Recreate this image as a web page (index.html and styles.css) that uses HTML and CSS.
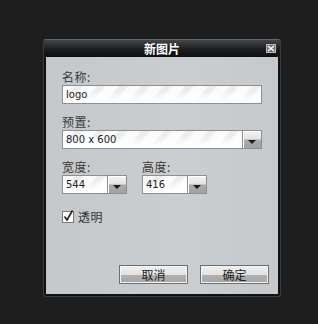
FILE: index.html
```html
<!DOCTYPE html>
<html lang="zh">
<head>
  <meta charset="UTF-8" />
  <title>新图片</title>
  <link rel="stylesheet" href="styles.css">
</head>
<body>
  <div class="dialog">
    <div class="title-bar">
      <span class="title">新图片</span>
      <button class="close-btn">
        <svg width="8" height="7" viewBox="0 0 8 7"><path d="M1 1 L7 6 M7 1 L1 6" stroke="#fff" stroke-width="1.6"/></svg>
      </button>
    </div>

    <div class="content">
      <div class="field">
        <label>名称:</label>
        <div class="text-box">logo</div>
      </div>

      <div class="field">
        <label>预置:</label>
        <div class="select">
          <div class="text-box">800 x 600</div>
          <div class="drop-btn"><span class="arrow"></span></div>
        </div>
      </div>

      <div class="field-row">
        <div class="field small">
          <label>宽度:</label>
          <div class="select">
            <div class="text-box">544</div>
            <div class="drop-btn"><span class="arrow"></span></div>
          </div>
        </div>
        <div class="field small">
          <label>高度:</label>
          <div class="select">
            <div class="text-box">416</div>
            <div class="drop-btn"><span class="arrow"></span></div>
          </div>
        </div>
      </div>

      <div class="check-row">
        <svg class="check" width="14" height="14" viewBox="0 0 14 14">
          <rect x="0.5" y="2.5" width="11" height="11" fill="#fff" stroke="#7a7a7a"/>
          <path d="M2.5 7.5 L5 11 L10.5 1.5" fill="none" stroke="#222" stroke-width="1.6"/>
        </svg>
        <span>透明</span>
      </div>

      <div class="buttons">
        <button class="btn">取消</button>
        <button class="btn">确定</button>
      </div>
    </div>
  </div>
</body>
</html>
```

FILE: styles.css
```css
* {
  box-sizing: border-box;
  margin: 0;
  padding: 0;
}

body {
  background-color: #1e1e1e;
  font-family: "Noto Sans CJK SC", "DejaVu Sans", sans-serif;
  color: #333;
}

.dialog {
  margin: 39px 0 0 43px;
  width: 238px;
  height: 258px;
  background-color: #0e1012;
  border: 1px solid #3a3d40;
  border-top-color: #66696c;
  border-radius: 3px;
  padding: 0 2px 2px;
  display: flex;
  flex-direction: column;
}

.title-bar {
  height: 17px;
  margin: 0 -2px;
  padding: 0 4px;
  display: flex;
  align-items: center;
  justify-content: center;
  position: relative;
  background: linear-gradient(#43464a, #1b1d20 55%, #0d0e10);
  border-radius: 2px 2px 0 0;
}

.title {
  color: #fff;
  font-size: 12px;
  font-weight: bold;
  line-height: 14px;
}

.close-btn {
  position: absolute;
  right: 4px;
  top: 4px;
  width: 10px;
  height: 9px;
  background: #6b6e71;
  border: 1px solid #b8b8b8;
  display: flex;
  align-items: center;
  justify-content: center;
}

.content {
  flex: 1;
  background: linear-gradient(to right, #c5c8cb, #cbced0 60%, #c6c9cc);
  padding: 13px 9px 10px 16px;
  display: flex;
  flex-direction: column;
}

.field {
  display: flex;
  flex-direction: column;
  width: 200px;
  margin-bottom: 11px;
}

.field label {
  font-size: 12px;
  line-height: 14px;
  height: 15px;
  color: #3a3a3a;
  letter-spacing: 0.5px;
}

.text-box {
  height: 19px;
  border: 1px solid #8e8e8e;
  padding: 1px 3px 0;
  font-family: "DejaVu Sans", sans-serif;
  font-size: 10px;
  line-height: 16px;
  color: #222;
  background:
    linear-gradient(to bottom, rgba(255,255,255,0) 25%, #fff 90%),
    repeating-linear-gradient(130deg, #fbfbfb 0, #fbfbfb 8px, #ececec 10px, #ececec 14px, #fbfbfb 17px);
  flex: 1;
}

.select {
  display: flex;
}

.drop-btn {
  width: 19px;
  height: 19px;
  border: 1px solid #8e8e8e;
  border-left: none;
  background: linear-gradient(#f2f2f2, #e4e4e4 45%, #a9a9a9 55%, #a2a2a2);
  box-shadow: inset 1px 1px 0 #fff;
  display: flex;
  justify-content: center;
  padding-top: 9px;
}

.arrow {
  width: 0;
  height: 0;
  border-left: 4px solid transparent;
  border-right: 4px solid transparent;
  border-top: 4px solid #1c1c1c;
}

.field-row {
  display: flex;
  gap: 15px;
}

.field.small {
  width: 65px;
}

.check-row {
  display: flex;
  align-items: center;
  gap: 2px;
  margin-top: 5px;
  font-size: 12px;
  line-height: 14px;
  letter-spacing: 0.5px;
}

.check {
  margin-top: -3px;
}

.buttons {
  margin-top: auto;
  display: flex;
  justify-content: flex-end;
  gap: 12px;
}

.btn {
  width: 69px;
  height: 19px;
  border: 1px solid #6e6e6e;
  box-shadow: inset 0 0 0 1px #f4f4f4;
  background: linear-gradient(#f0f0f0, #e2e2e2 50%, #b0b0b0 55%, #a6a6a6);
  font-family: "Noto Sans CJK SC", sans-serif;
  font-size: 12px;
  line-height: 15px;
  color: #222;
}
```
